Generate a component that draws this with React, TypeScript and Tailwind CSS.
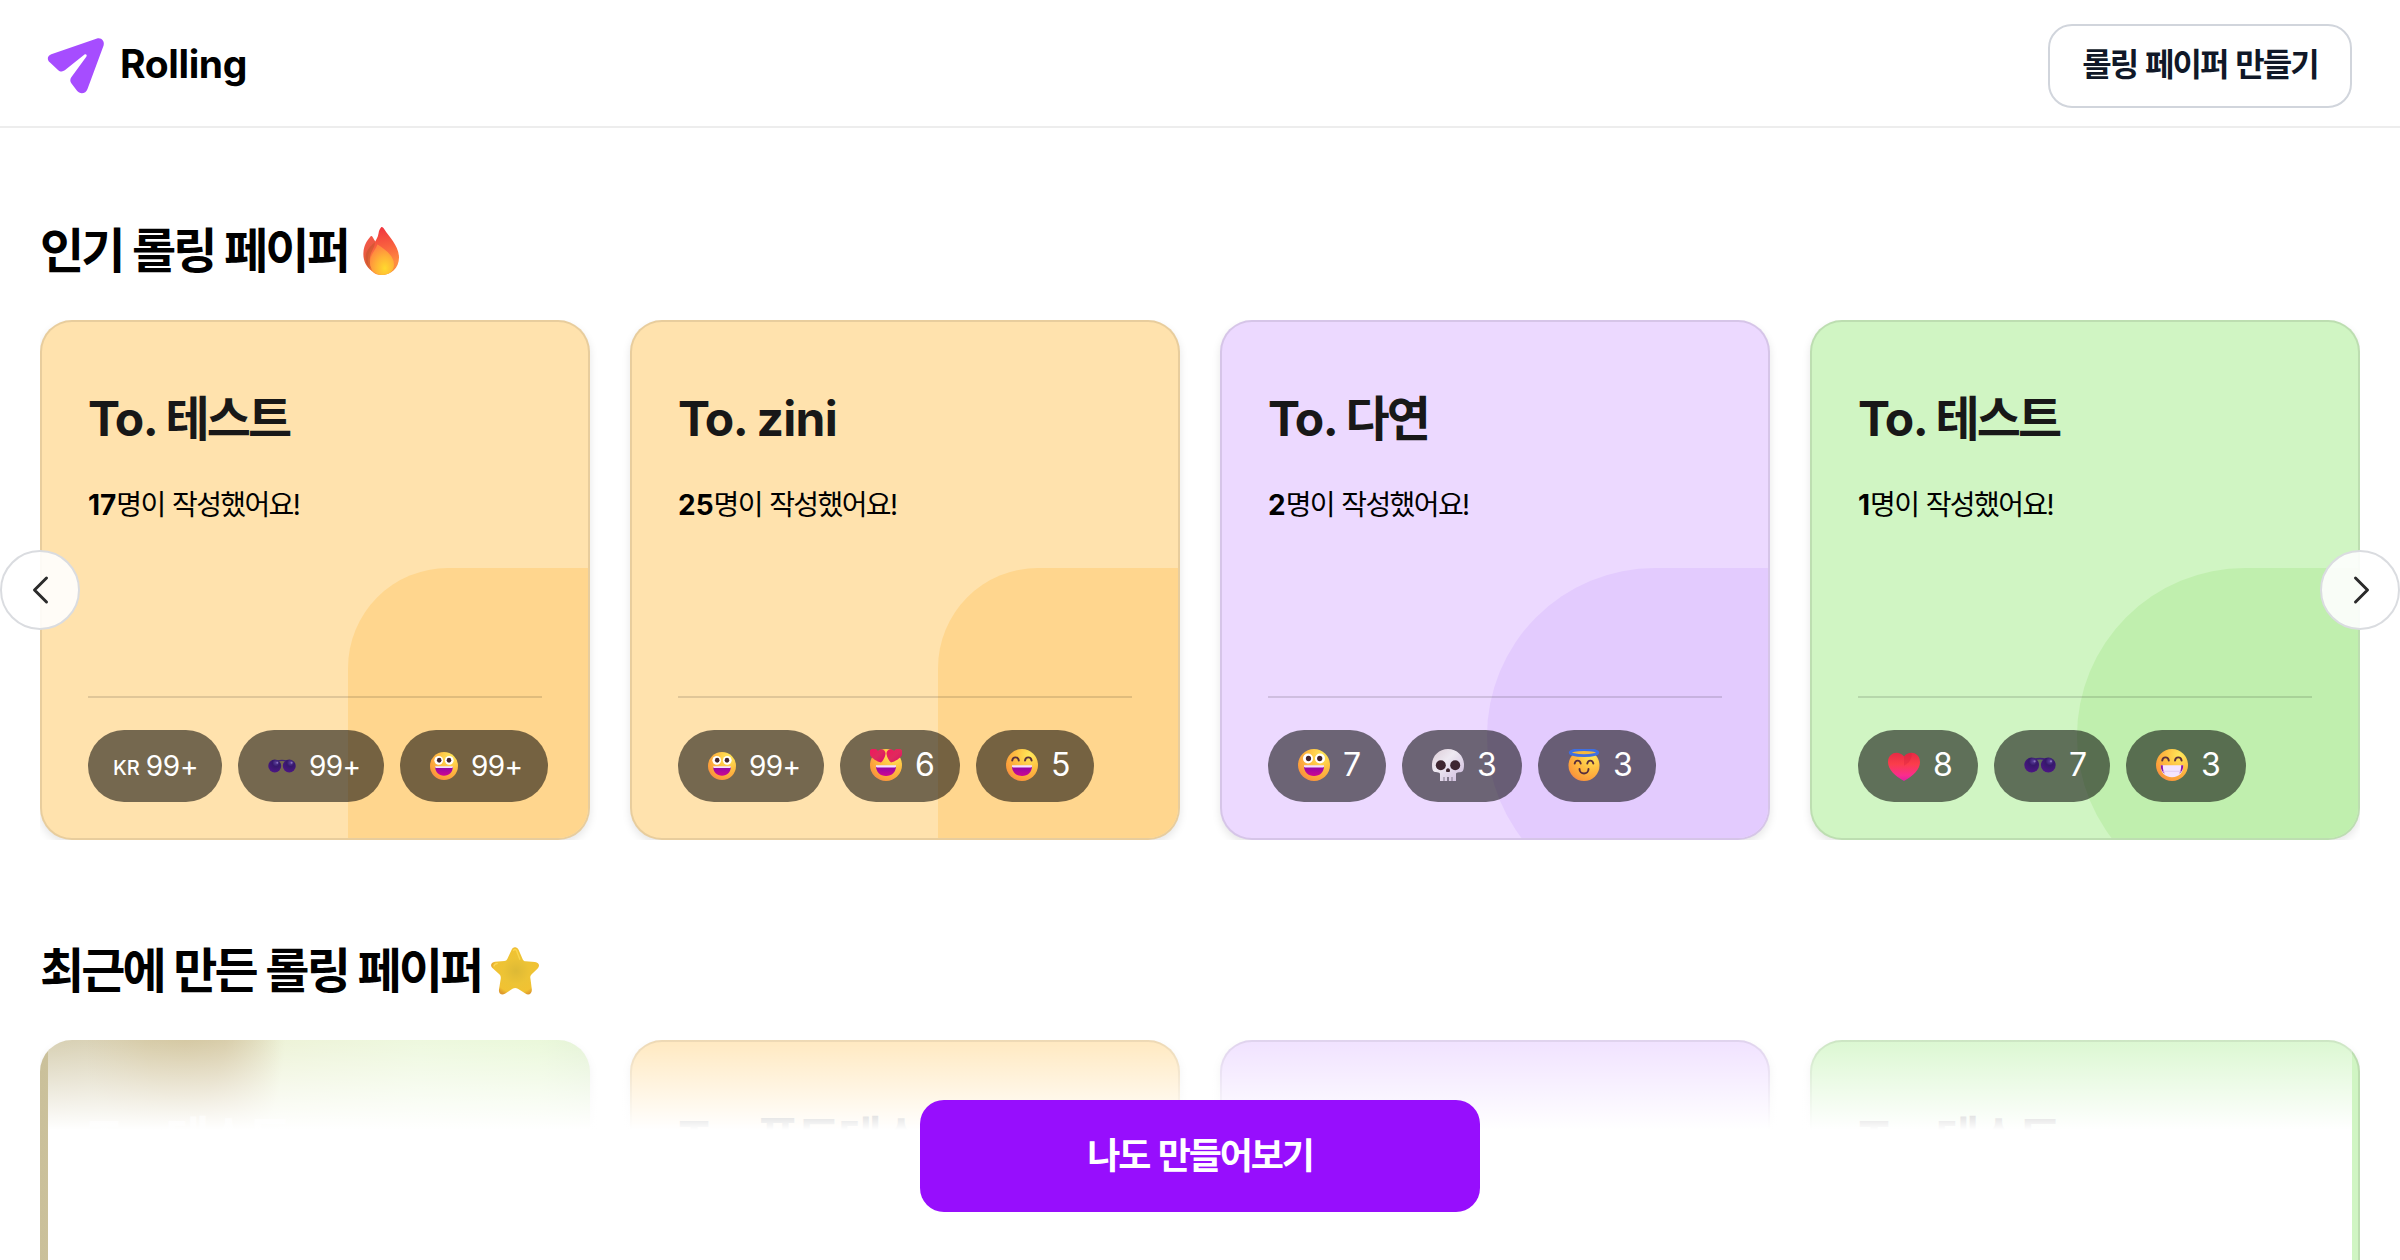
import React from "react";

const defs = (
  <svg width="0" height="0" className="absolute" aria-hidden="true">
    <defs>
      <radialGradient id="face" cx="0.74" cy="0.2" r="1">
        <stop offset="0" stopColor="#FFE95A" />
        <stop offset="0.4" stopColor="#FFC243" />
        <stop offset="0.82" stopColor="#FB9A3A" />
        <stop offset="1" stopColor="#E9706A" />
      </radialGradient>
      <linearGradient id="mouth" x1="0" y1="0" x2="0" y2="1">
        <stop offset="0" stopColor="#8B08A8" />
        <stop offset="1" stopColor="#CF0790" />
      </linearGradient>
      <radialGradient id="lens" cx="0.6" cy="0.25" r="0.8">
        <stop offset="0" stopColor="#5B3F9C" />
        <stop offset="0.35" stopColor="#35186B" />
        <stop offset="1" stopColor="#4E1586" />
      </radialGradient>
      <linearGradient id="heart" x1="0.5" y1="0" x2="0.5" y2="1">
        <stop offset="0" stopColor="#E82A45" />
        <stop offset="0.4" stopColor="#FA3D4A" />
        <stop offset="0.8" stopColor="#FB2C8D" />
        <stop offset="1" stopColor="#E01FA6" />
      </linearGradient>
      <linearGradient id="eyeHeart" x1="0" y1="0" x2="1" y2="1">
        <stop offset="0" stopColor="#F2155F" />
        <stop offset="0.5" stopColor="#E02A5C" />
        <stop offset="1" stopColor="#DC0A6C" />
      </linearGradient>
      <linearGradient id="skull" x1="0" y1="0" x2="1" y2="1">
        <stop offset="0" stopColor="#DCCBD6" />
        <stop offset="0.4" stopColor="#EEE9F2" />
        <stop offset="1" stopColor="#CDB9DC" />
      </linearGradient>
      <linearGradient id="flameOuter" x1="0.5" y1="0" x2="0.6" y2="1">
        <stop offset="0" stopColor="#F0353F" />
        <stop offset="0.4" stopColor="#F9603F" />
        <stop offset="0.75" stopColor="#FF8C40" />
        <stop offset="1" stopColor="#F98A3D" />
      </linearGradient>
      <linearGradient id="flameSide" x1="0" y1="0" x2="0.4" y2="1">
        <stop offset="0" stopColor="#F95550" />
        <stop offset="1" stopColor="#D8612F" />
      </linearGradient>
      <radialGradient id="flameInner" cx="0.62" cy="0.78" r="0.75">
        <stop offset="0" stopColor="#FFD92E" />
        <stop offset="0.5" stopColor="#FFB336" />
        <stop offset="1" stopColor="#FF8540" />
      </radialGradient>
      <radialGradient id="star" cx="0.52" cy="0.5" r="0.55">
        <stop offset="0" stopColor="#DDB935" />
        <stop offset="0.5" stopColor="#EDC335" />
        <stop offset="0.85" stopColor="#F1C232" />
        <stop offset="1" stopColor="#DE9A2C" />
      </radialGradient>
    </defs>
  </svg>
);

type EmojiName = "zany" | "glasses" | "hearts" | "smile" | "skull" | "angel" | "heart" | "grin";

const openMouth = (
  <>
    <path d="M6 17h20c0 6-4 10-10 10S6 23 6 17Z" fill="url(#mouth)" />
    <path d="M6 16.200h20v1c0 .8-.5 1.200-1.200 1.200H7.200c-.7 0-1.200-.4-1.200-1.200Z" fill="#F6DFFF" />
  </>
);

const smileEyes = (
  <path
    d="M6.200 11.600c.6-4.300 6-4.300 6.600 0M19 11.600c.6-4.300 6-4.300 6.600 0"
    fill="none"
    stroke="#5A2F3C"
    strokeWidth="1.900"
    strokeLinecap="round"
  />
);

const drawings: Record<EmojiName, React.ReactNode> = {
  zany: (
    <>
      <circle cx="16" cy="16" r="16" fill="url(#face)" />
      <circle cx="10" cy="9.500" r="5" fill="#fff" />
      <circle cx="22" cy="9.500" r="5" fill="#fff" />
      <ellipse cx="10.500" cy="9.500" rx="2.600" ry="2.800" fill="#43242C" />
      <ellipse cx="21.700" cy="9.500" rx="2.600" ry="2.800" fill="#43242C" />
      {openMouth}
    </>
  ),
  glasses: (
    <>
      <path d="M10 10.500c4-1.200 8-1.200 12 0" fill="none" stroke="#3F2278" strokeWidth="1.600" />
      <circle cx="7.700" cy="16" r="7.400" fill="url(#lens)" />
      <circle cx="24.300" cy="16" r="7.400" fill="url(#lens)" />
      <circle cx="10.600" cy="12.300" r="1.100" fill="#8A74BC" />
      <circle cx="27" cy="12.300" r="1.100" fill="#8A74BC" />
    </>
  ),
  hearts: (
    <>
      <circle cx="16" cy="16" r="16" fill="url(#face)" />
      {openMouth}
      <path d="M11 13.600C6 12-.6 8-.6 3.600-.6-.6 5.500-2 8 2c3-3.500 8-1 7.500 3-.4 3.500-2.500 6.600-4.500 8.600Z" fill="url(#eyeHeart)" />
      <path d="M21 13.600C26 12 32.600 8 32.600 3.600 32.600-.6 26.500-2 24 2c-3-3.500-8-1-7.500 3 .4 3.500 2.500 6.600 4.500 8.600Z" fill="url(#eyeHeart)" />
    </>
  ),
  smile: (
    <>
      <circle cx="16" cy="16" r="16" fill="url(#face)" />
      {smileEyes}
      {openMouth}
    </>
  ),
  grin: (
    <>
      <circle cx="16" cy="16" r="16" fill="url(#face)" />
      {smileEyes}
      <path d="M4.800 16.300h22.400c.4 7.500-4 11.900-11.200 11.900S4.400 23.800 4.800 16.300Z" fill="#F4E4FF" />
      <path d="M4.800 16.300h2c0 3.300.5 6 2 8.500-2.900-2-4.200-5-4-8.500ZM27.200 16.300h-2c0 3.300-.5 6-2 8.500 2.900-2 4.200-5 4-8.500Z" fill="#8B16A8" />
      <path d="M7 22.300h18" stroke="#DCC3F0" strokeWidth="0.800" />
    </>
  ),
  angel: (
    <>
      <circle cx="16" cy="16.500" r="15.500" fill="url(#face)" />
      <ellipse cx="16" cy="3.600" rx="13.800" ry="3" fill="#F6B93B" stroke="#3F6FE0" strokeWidth="2.800" />
      <path d="M6.700 14.600c.6-4 5.400-4 6 0M19.300 14.600c.6-4 5.400-4 6 0M11.500 20c0 6 9 6 9 0" fill="none" stroke="#5A2F3C" strokeWidth="1.900" strokeLinecap="round" />
    </>
  ),
  skull: (
    <>
      <path
        d="M16 0C7 0 0 7 0 15.500c0 2.800.3 5 1.200 6.500 1.300 2 6.800.6 6.800 3V32h3.600v-4h.8v4h2.800v-4h1.600v4h2.800v-4h.8v4H24v-7c0-2.400 5.500-1 6.800-3 .9-1.500 1.200-3.700 1.200-6.500C32 7 25 0 16 0Z"
        fill="url(#skull)"
      />
      <circle cx="8.800" cy="16.300" r="5" fill="#3E2631" />
      <circle cx="23.200" cy="16.300" r="5" fill="#3E2631" />
      <path d="M16 19.300c1.200 0 2 1.300 2 2.400 0 1.300-.9 1.300-2 1.300s-2 0-2-1.300c0-1.100.8-2.400 2-2.400Z" fill="#3E2631" />
    </>
  ),
  heart: (
    <>
      <path d="M16 32C7 27 0 20.500 0 13 0 3.500 10.500.6 16 7.500 21.500.6 32 3.500 32 13 32 20.500 25 27 16 32Z" fill="url(#heart)" />
      <path d="M16 7.500c2-2.600 4.500-3.900 7.500-3.300 1 5-2.500 10-7.500 12.500Z" fill="#D41F3E" opacity="0.35" />
    </>
  ),
};

function Emoji({ name, small }: { name: EmojiName; small?: boolean }) {
  return (
    <svg viewBox="0 0 32 32" className={small ? "size-7 shrink-0" : "-mt-0.5 size-8 shrink-0"} aria-hidden="true">
      {drawings[name]}
    </svg>
  );
}

function Flame() {
  return (
    <svg viewBox="0 0 36 48" className="ml-[15px] h-12 w-9" aria-hidden="true">
      <path d="M7.500 9.500C9 8 10 11 11 12.500l4 6L9 44C3 40 0 33 .4 26 .8 18.500 3.500 14 7.500 9.500Z" fill="url(#flameSide)" />
      <path d="M18 .6c1-1.200 2.300 0 3.500 2C26 10 36 19 36 30.500 36 41 28 48 18.500 48S4 40.500 5 30.500C6 21 14.500 14 15.500 6.500 16 3.500 17 1.600 18 .6Z" fill="url(#flameOuter)" />
      <path d="M11.500 15.500c1.800 3-4.500 9-4.700 17C6.700 37 8 41 10 43.500 4 39.500 2.200 34 2.800 28.500 3.500 22.500 8 19 11.500 15.500Z" fill="#C9552F" opacity="0.65" />
      <path d="M14.500 17.500C20 21 31 28 31 37.500 31 44 26 48 19 48S7 43 7 35.500c0-7 5-12 7.500-18Z" fill="url(#flameInner)" />
    </svg>
  );
}

function Star() {
  return (
    <svg viewBox="0 0 48 48" className="ml-[10px] size-12" aria-hidden="true">
      <path
        d="M20.500 3c1.400-3.600 5.600-3.600 7.200 0l4.100 9.500c.6 1.300 1.500 1.700 2.900 1.800l9.300.7c4 .3 5.300 4 2.400 6.700l-5.700 5.600c-1.400 1.400-1.700 2.700-1.200 4.600l1.300 10.300c.5 4.400-3 6.700-6.400 4.400l-7.500-4.800c-1.900-1.200-3.500-1.200-5.400 0l-7.600 5c-3.300 2-6.500-.2-5.900-4.200l1.700-10.700c.3-1.900 0-3.200-1.400-4.600l-6.600-6c-2.900-2.700-1.700-6.100 2.300-6.500l9.400-.9c1.400-.1 2.300-.6 2.900-1.900Z"
        fill="url(#star)"
      />
      <path d="M22.600 3.500c.8-1.500 2.300-1.200 3 .3l3.200 8.400" fill="none" stroke="#FFDE5A" strokeWidth="1.400" opacity="0.700" strokeLinecap="round" />
      <path d="M3 18.800c.3-1.500 1.500-2 3.200-2.200" fill="none" stroke="#FFE06A" strokeWidth="1.400" opacity="0.700" strokeLinecap="round" />
    </svg>
  );
}

function Logo() {
  return (
    <div className="flex items-center">
      <svg viewBox="0 0 64 64" className="size-16 translate-y-[2px]" aria-hidden="true">
        <path
          d="M53 4.500c4-1.400 8 2.400 6.600 7L43.500 55c-1.500 4.800-7.600 5.600-10.500 1.800l-5.500-7.300c-1.500-2-1.600-4.200-.2-6.300l15-20.500c1.200-1.800-.4-3.300-2.100-2L20.800 36.300c-2.200 1.600-4.700 1.500-6.800-.4L6 28.600C2.600 25.600 3.400 21.700 7.300 20.300Z"
          fill="#A64DFF"
        />
      </svg>
      <span className="-mt-0.5 ml-[12px] text-[39px] leading-none font-bold tracking-[-0.01em] text-black">Rolling</span>
    </div>
  );
}

type Theme = "orange" | "purple" | "green" | "photo";
interface Reaction {
  emoji?: EmojiName;
  text?: string;
  count: string;
  width: string;
}
interface Paper {
  name: string;
  count: number;
  theme: Theme;
  reactions: Reaction[];
}

const popular: Paper[] = [
  {
    name: "테스트",
    count: 17,
    theme: "orange",
    reactions: [
      { text: "KR", count: "99+", width: "w-[134px]" },
      { emoji: "glasses", count: "99+", width: "w-[146px]" },
      { emoji: "zany", count: "99+", width: "w-[148px]" },
    ],
  },
  {
    name: "zini",
    count: 25,
    theme: "orange",
    reactions: [
      { emoji: "zany", count: "99+", width: "w-[146px]" },
      { emoji: "hearts", count: "6", width: "w-[120px]" },
      { emoji: "smile", count: "5", width: "w-[118px]" },
    ],
  },
  {
    name: "다연",
    count: 2,
    theme: "purple",
    reactions: [
      { emoji: "zany", count: "7", width: "w-[118px]" },
      { emoji: "skull", count: "3", width: "w-[120px]" },
      { emoji: "angel", count: "3", width: "w-[118px]" },
    ],
  },
  {
    name: "테스트",
    count: 1,
    theme: "green",
    reactions: [
      { emoji: "heart", count: "8", width: "w-[120px]" },
      { emoji: "glasses", count: "7", width: "w-[116px]" },
      { emoji: "grin", count: "3", width: "w-[120px]" },
    ],
  },
];

const recent: Paper[] = [
  { name: "테스트", count: 0, theme: "photo", reactions: [] },
  { name: "푸드테스트", count: 0, theme: "orange", reactions: [] },
  { name: "다연", count: 0, theme: "purple", reactions: [] },
  { name: "테스트", count: 0, theme: "green", reactions: [] },
];

const surface: Record<Theme, string> = {
  orange: "bg-[#FFE2AD]",
  purple: "bg-[#ECD9FF]",
  green: "bg-[#D0F5C3]",
  photo:
    "bg-[#CAC09A] bg-[radial-gradient(ellipse_100px_150px_at_145px_0px,rgba(200,184,135,1)_0%,rgba(200,184,135,0.8)_40%,rgba(200,184,135,0)_100%),linear-gradient(90deg,#CAC09A_0px,#D3CAA8_110px,#DAD0AE_170px,#E8EFCC_240px,#E8F6D4_380px,#E4F6CF_500px,#DDEFCB_550px)]",
};

const corner: Record<Theme, string> = {
  orange: "left-[306px] w-[400px] h-[400px] rounded-[100px] bg-[#FFD68E]",
  purple: "left-[265px] w-[500px] h-[336px] rounded-[168px] bg-[#E3CBFE]",
  green: "left-[265px] w-[500px] h-[336px] rounded-[168px] bg-[#C0EFAE]",
  photo: "hidden",
};

function Badge({ r }: { r: Reaction }) {
  const long = r.count.length > 1;
  return (
    <li className={`flex h-[72px] shrink-0 items-center rounded-full bg-black/54 text-white ${r.width} ${r.text ? "pl-[25px]" : "pl-[30px]"}`}>
      {r.emoji ? <Emoji name={r.emoji} small={long} /> : <span className="pt-1 text-[20px] leading-none font-medium">{r.text}</span>}
      <span className={long ? (r.text ? "ml-[6px] text-[28px] leading-none tracking-[-0.01em]" : "ml-[13px] text-[28px] leading-none tracking-[-0.02em]") : "ml-[13px] -mt-0.5 text-[32px] leading-none"}>
        {r.count}
      </span>
    </li>
  );
}

function Card({ paper }: { paper: Paper }) {
  const photo = paper.theme === "photo";
  return (
    <article
      className={`relative h-[520px] w-[550px] shrink-0 overflow-hidden rounded-[32px] ${photo ? "" : "border-2 border-black/9"} shadow-[0_4px_8px_rgba(0,0,0,0.10)] ${surface[paper.theme]}`}
    >
      <div className={`absolute top-[246px] ${corner[paper.theme]}`} />
      <div className={`relative flex h-full flex-col ${photo ? "px-12 pt-[70px]" : "px-[46px] pt-[68px]"}`}>
        <h3 className={`flex h-[58px] items-center text-[48px] leading-none font-bold whitespace-nowrap ${photo ? "text-white/60" : "text-[#181818]"}`}>
          <span className="tracking-[-0.03em]">To.</span>
          <span className={paper.name === "zini" ? "ml-[9px] tracking-[-0.015em]" : "ml-[8px] tracking-[-0.06em]"}>{paper.name}</span>
        </h3>
        {paper.count > 0 && (
          <p className="mt-[37px] flex h-[40px] items-center text-[28px] leading-none text-black">
            <b className="font-bold">{paper.count}</b>
            <span className="tracking-[-0.057em] [word-spacing:1px]">명이 작성했어요!</span>
          </p>
        )}
        {paper.reactions.length > 0 && (
          <div className="mt-auto mb-9">
            <div className="h-0.5 bg-black/12" />
            <ul className="mt-8 flex gap-4">
              {paper.reactions.map((r, i) => (
                <Badge key={i} r={r} />
              ))}
            </ul>
          </div>
        )}
      </div>
    </article>
  );
}

function Arrow({ side }: { side: "left" | "right" }) {
  return (
    <button
      aria-label={side}
      className={`absolute top-[230px] flex size-20 items-center justify-center rounded-full border-2 border-[#DADCE0] bg-white/90 ${side === "left" ? "-left-10" : "-right-10"}`}
    >
      <svg viewBox="0 0 32 32" className="size-8" fill="none" stroke="#2B2B2B" strokeWidth="3" strokeLinecap="round" strokeLinejoin="round">
        <path d={side === "left" ? "M22.500 4 10.500 16l12 12" : "M11.500 4l12 12-12 12"} />
      </svg>
    </button>
  );
}

function CardRow({ papers }: { papers: Paper[] }) {
  return (
    <div className="flex gap-10 overflow-hidden">
      {papers.map((p, i) => (
        <Card key={i} paper={p} />
      ))}
    </div>
  );
}

export default function App() {
  return (
    <div lang="ko" className="relative h-[1260px] overflow-hidden bg-white font-[Inter,'Noto_Sans_CJK_KR',sans-serif]">
      {defs}
      <header className="flex h-32 items-center justify-between border-b-2 border-[#EDEDED] pt-[2px] pr-12 pl-11">
        <Logo />
        <button className="mt-1 flex h-[84px] w-[304px] items-center justify-center rounded-[24px] border-2 border-[#D1D5DC] pb-0.5 text-[32px] font-bold tracking-[-0.06em] text-[#101828] [word-spacing:2px]">
          롤링 페이퍼 만들기
        </button>
      </header>
      <main className="px-10 pt-[94px]">
        <section>
          <h2 className="flex h-[58px] items-center text-[48px] leading-none font-bold tracking-[-0.06em] [word-spacing:1px]">
            인기 롤링 페이퍼
            <Flame />
          </h2>
          <div className="relative mt-10">
            <CardRow papers={popular} />
            <Arrow side="left" />
            <Arrow side="right" />
          </div>
        </section>
        <section className="mt-[102px]">
          <h2 className="flex h-[58px] items-center text-[48px] leading-none font-bold tracking-[-0.06em] [word-spacing:1px]">
            최근에 만든 롤링 페이퍼
            <Star />
          </h2>
          <div className="mt-10">
            <CardRow papers={recent} />
          </div>
        </section>
      </main>
      <div className="absolute inset-x-12 bottom-0 flex h-[248px] justify-center bg-[linear-gradient(180deg,rgba(255,255,255,0)_0px,#fff_118px)] pt-[88px]">
        <button className="h-28 w-[560px] rounded-[24px] bg-[#970EFD] text-[36px] font-bold tracking-[-0.058em] text-white [word-spacing:2px]">나도 만들어보기</button>
      </div>
    </div>
  );
}
